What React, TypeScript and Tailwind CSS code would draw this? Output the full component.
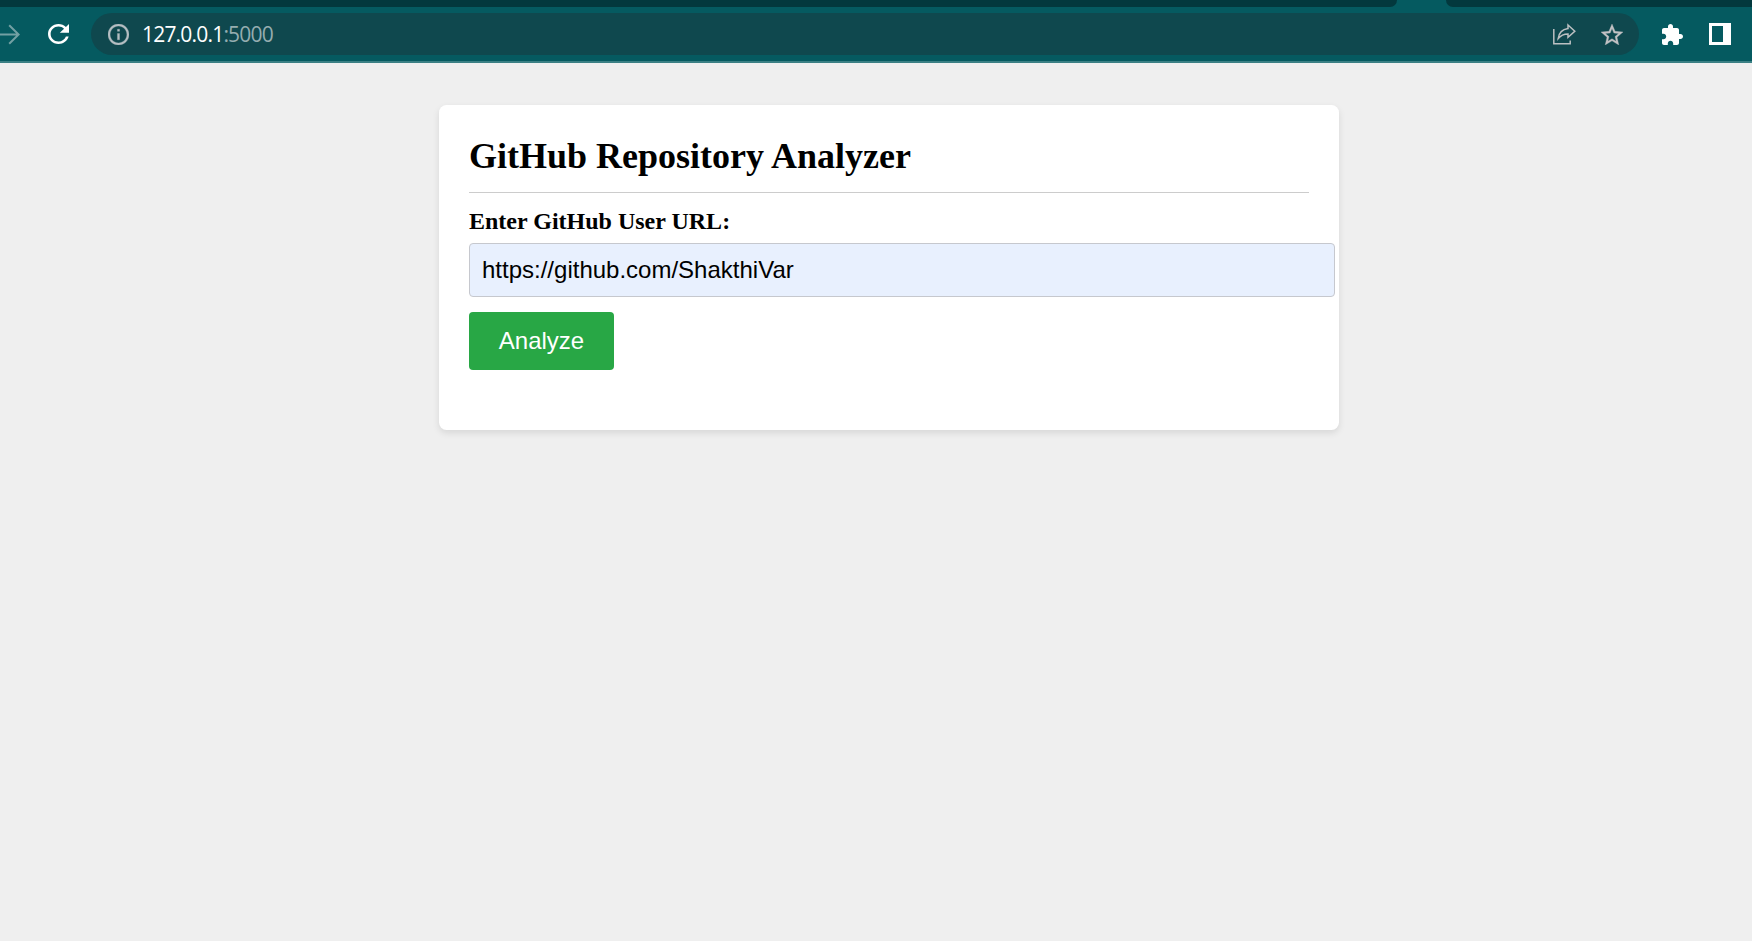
import React, { useState } from "react";

function ForwardIcon() {
  return (
    <svg width="20" height="21" viewBox="0 0 20 21" fill="none" stroke="#73a0a3" strokeWidth="2">
      <path d="M0 10.5H18.4M9.2 1.2L18.6 10.5L9.2 19.8" />
    </svg>
  );
}

function ReloadIcon() {
  return (
    <svg width="21" height="20" viewBox="4 4 16 16" preserveAspectRatio="none" fill="#ffffff">
      <path d="M17.65 6.35C16.2 4.9 14.21 4 12 4c-4.42 0-7.99 3.58-7.99 8s3.57 8 7.99 8c3.73 0 6.84-2.55 7.73-6h-2.08c-.82 2.33-3.04 4-5.65 4-3.31 0-6-2.69-6-6s2.69-6 6-6c1.66 0 3.14.69 4.22 1.78L13 11h7V4l-2.35 2.35z" />
    </svg>
  );
}

function InfoIcon() {
  return (
    <svg width="21" height="21" viewBox="2 2 20 20" fill="#b5bec2" stroke="#b5bec2" strokeWidth="0.3">
      <path d="M11 7h2v2h-2zm0 4h2v6h-2zm1-9C6.48 2 2 6.48 2 12s4.48 10 10 10 10-4.48 10-10S17.52 2 12 2zm0 18c-4.41 0-8-3.59-8-8s3.59-8 8-8 8 3.59 8 8-3.59 8-8 8z" />
    </svg>
  );
}

function ShareIcon() {
  return (
    <svg width="23" height="22" viewBox="0 0 23 22" fill="none" stroke="#bcc0c2" strokeWidth="1.5">
      <path d="M0.8 6V20.8H17.2V17.5" />
      <path d="M15 2L21.8 8.3L15 14.4V11C10.5 11 7.6 12.6 5.2 15.6C5.8 10.4 9 6.3 15 5.5Z" />
    </svg>
  );
}

function StarIcon() {
  return (
    <svg width="22" height="21" viewBox="2 2 20 19" fill="#c3c2c4" stroke="#c3c2c4" strokeWidth="0.3">
      <path d="M22 9.24l-7.19-.62L12 2 9.19 8.63 2 9.24l5.46 4.73L5.82 21 12 17.27 18.18 21l-1.63-7.03L22 9.24zM12 15.4l-3.76 2.27 1-4.28-3.32-2.88 4.38-.38L12 6.1l1.71 4.04 4.38.38-3.32 2.88 1 4.28L12 15.4z" />
    </svg>
  );
}

function PuzzleIcon() {
  return (
    <svg width="21" height="21" viewBox="2 1 21 21" fill="#ffffff">
      <path d="M20.5 11H19V7c0-1.1-.9-2-2-2h-4V3.5C13 2.12 11.88 1 10.5 1S8 2.12 8 3.5V5H4c-1.1 0-1.99.9-1.99 2v3.8H3.5c1.49 0 2.7 1.21 2.7 2.7s-1.21 2.7-2.7 2.7H2V20c0 1.1.9 2 2 2h3.8v-1.5c0-1.49 1.21-2.7 2.7-2.7 1.49 0 2.7 1.21 2.7 2.7V22H17c1.1 0 2-.9 2-2v-4h1.5c1.38 0 2.5-1.12 2.5-2.5S21.88 11 20.5 11z" />
    </svg>
  );
}

function SidePanelIcon() {
  return (
    <svg width="22" height="22" viewBox="0 0 22 22" fill="#ffffff" fillRule="evenodd">
      <path d="M0 0H22V22H0ZM3 3V19H14V3Z" />
    </svg>
  );
}

function BrowserBar() {
  return (
    <header className="bg-[#055a60]">
      <div className="flex h-[7px] justify-between">
        <div className="w-[1397px] rounded-br-[8px] bg-[#03383d]" />
        <div className="w-[306px] rounded-bl-[8px] bg-[#03383d]" />
      </div>
      <div className="flex h-14 items-start border-b-2 border-[#3b8084] pt-1.5">
        <div className="flex h-[42px] w-[91px] shrink-0 items-center gap-7">
          <ForwardIcon />
          <ReloadIcon />
        </div>
        <div className="flex h-[42px] w-[1548px] shrink-0 items-center rounded-full bg-[#0f484e] pr-4 pl-[17px]">
          <InfoIcon />
          <span className="ml-[13px] grow font-['Open_Sans',sans-serif] text-[21px] leading-[42px] tracking-[-0.8px] text-[#95adb0]">
            <span className="text-white">127.0.0.1</span>:5000
          </span>
          <div className="flex items-center gap-[25px]">
            <ShareIcon />
            <StarIcon />
          </div>
        </div>
        <div className="ml-[23px] flex h-[42px] items-center gap-[26px]">
          <PuzzleIcon />
          <SidePanelIcon />
        </div>
      </div>
    </header>
  );
}

export default function App() {
  const [url, setUrl] = useState("https://github.com/ShakthiVar");
  return (
    <div className="h-[941px] overflow-hidden bg-[#efefef]">
      <BrowserBar />
      <main className="mt-[42px] ml-[439px] h-[325px] w-[900px] rounded-[7.5px] bg-white px-[30px] pt-[30px] shadow-[0_3px_7.5px_rgba(0,0,0,0.1)]">
        <h1 className="h-[58px] border-b border-[#cccccc] font-['Liberation_Serif',serif] text-[36px] leading-[42px] font-bold whitespace-nowrap text-black">
          GitHub Repository Analyzer
        </h1>
        <form onSubmit={(e) => e.preventDefault()}>
          <label
            htmlFor="url"
            className="block h-[50px] pt-[15px] font-['Liberation_Serif',serif] text-[24px] leading-[27px] font-bold text-black"
          >
            Enter GitHub User URL:
          </label>
          <input
            id="url"
            value={url}
            onChange={(e) => setUrl(e.target.value)}
            className="block h-[54px] w-[866px] rounded-[4px] border border-[#c6c8ce] bg-[#e8f0fe] px-[12px] font-['Liberation_Sans',sans-serif] text-[24px] text-black outline-none"
          />
          <button className="mt-[15px] h-[58px] w-[145px] rounded-[4px] bg-[#28a745] font-['Liberation_Sans',sans-serif] text-[24px] text-white">
            Analyze
          </button>
        </form>
      </main>
    </div>
  );
}
